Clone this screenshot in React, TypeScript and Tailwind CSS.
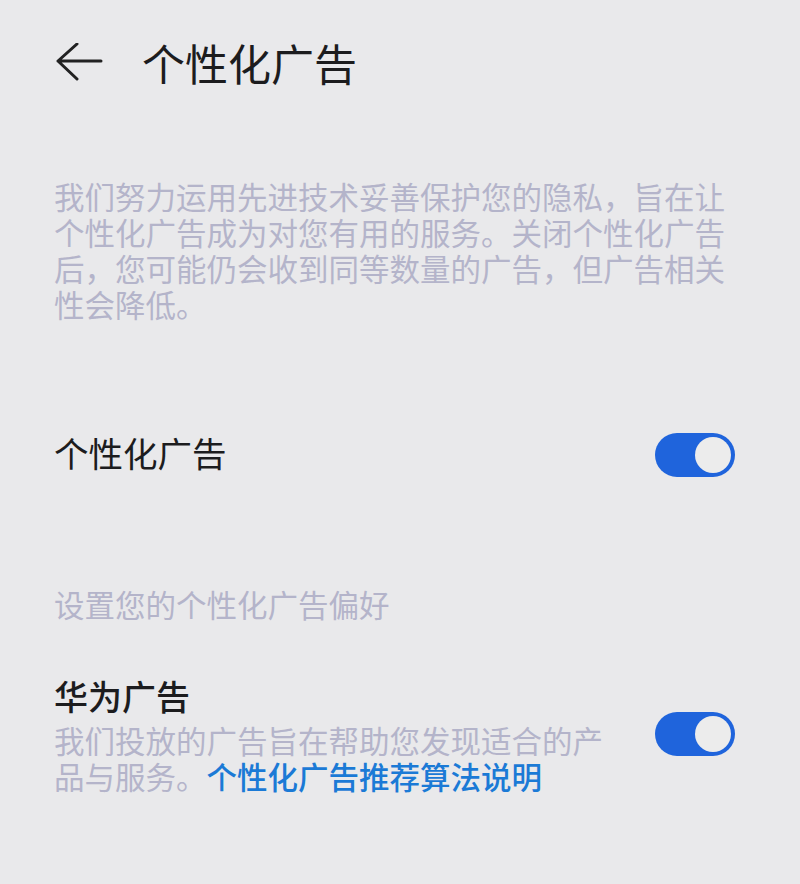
import { useState } from 'react';

const FONT = '"Noto Sans CJK SC", "Noto Sans", sans-serif';

interface ToggleProps {
  on: boolean;
  onChange: (v: boolean) => void;
  className?: string;
}

function Toggle({ on, onChange, className = '' }: ToggleProps) {
  return (
    <button
      onClick={() => onChange(!on)}
      className={`flex h-[44px] w-[80px] shrink-0 items-center rounded-full p-[4px] ${
        on ? 'justify-end bg-[#1f64dc]' : 'justify-start bg-[#c4c4cc]'
      } ${className}`}
    >
      <span className="block h-[36px] w-[36px] rounded-full bg-[#ececec]" />
    </button>
  );
}

export default function App() {
  const [personal, setPersonal] = useState(true);
  const [huawei, setHuawei] = useState(true);

  return (
    <div className="min-h-screen w-full bg-[#e9e9eb]" style={{ fontFamily: FONT }}>
      {/* cabecera */}
      <header className="flex h-[126px] items-start pt-[35px] pl-[55px]">
        <svg width="48" height="40" viewBox="0 0 48 40" fill="none" className="mt-[8px]">
          <path
            d="M46 18H3M22 1L3 18L22 36"
            stroke="#222"
            strokeWidth="3"
            strokeLinecap="round"
            strokeLinejoin="round"
          />
        </svg>
        <h1 className="ml-[39px] text-[43px] leading-[54px] font-normal text-[#1c1c1e]">个性化广告</h1>
      </header>

      <div className="px-[54px]">
        <p className="pt-[52px] text-[30.5px] leading-[36px] text-[#b4b4ca]">
          我们努力运用先进技术妥善保护您的隐私，旨在让个性化广告成为对您有用的服务。关闭个性化广告后，您可能仍会收到同等数量的广告，但广告相关性会降低。
        </p>

        <div className="mt-[108px] flex items-center justify-between pr-[11px]">
          <span className="text-[34.5px] leading-[44px] text-[#1c1c1e]">个性化广告</span>
          <Toggle on={personal} onChange={setPersonal} className="translate-y-[3px]" />
        </div>

        <p className="mt-[112px] text-[30.5px] leading-[36px] text-[#b4b4ca]">设置您的个性化广告偏好</p>

        <div className="mt-[52px] flex items-center justify-between pr-[11px]">
          <div className="w-[560px]">
            <div className="text-[34px] leading-[44px] font-medium text-[#1c1c1e]">华为广告</div>
            <p className="mt-[4px] text-[30.5px] leading-[36px] text-[#b4b4ca]">
              我们投放的广告旨在帮助您发现适合的产品与服务。
              <span className="font-medium text-[#1b7ad6]">个性化广告推荐算法说明</span>
            </p>
          </div>
          <Toggle on={huawei} onChange={setHuawei} />
        </div>
      </div>
    </div>
  );
}
